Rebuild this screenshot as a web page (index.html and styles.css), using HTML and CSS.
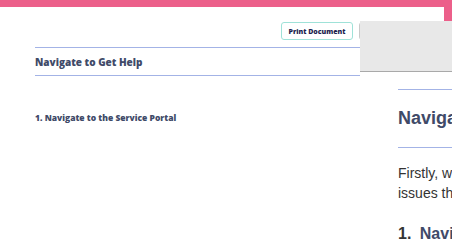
FILE: index.html
```html
<!DOCTYPE html>
<html lang="en">

<head>
  <meta charset="UTF-8">
  <meta name="viewport" content="width=device-width, initial-scale=1.0">
  <title>Navigate to Get Help</title>
  <link rel="stylesheet" href="styles.css">
</head>

<body>
  <div class="topbar"></div>

  <div class="page">
    <div class="toolbar">
      <button class="btn btn-print">Print Document</button>
      <button class="btn btn-other">Download</button>
    </div>

    <h1 class="doc-title">Navigate to Get Help</h1>

    <h2 class="step">1. Navigate to the Service Portal</h2>
  </div>

  <div class="preview">
    <div class="preview-head"></div>
    <div class="preview-body">
      <h1 class="preview-title">Navigate to Get Help</h1>
      <p>Firstly, we will show you how to report any issues that you are having.</p>
      <h2 class="preview-step"><span>1.</span> Navigate to the Service Portal</h2>
    </div>
  </div>
</body>

</html>
```

FILE: styles.css
```css
* {
  padding: 0;
  margin: 0;
  box-sizing: border-box;
}

body {
  font-family: "Open Sans", sans-serif;
  background-color: #ec5f8a;
  width: 452px;
  height: 248px;
  overflow: hidden;
  position: relative;
}

.topbar {
  height: 7px;
}

.page {
  width: 444px;
  height: 241px;
  background-color: white;
  padding: 15px 35px 0 35px;
}

.toolbar {
  display: flex;
  justify-content: flex-end;
  gap: 6px;
}

.btn {
  font-family: "Open Sans", sans-serif;
  font-size: 7px;
  font-weight: 800;
  color: #1d1f4f;
  background-color: white;
  border-radius: 3px;
  height: 18px;
  padding: 0;
  white-space: nowrap;
}

.btn-print {
  width: 72px;
  border: 1px solid #9fe2d8;
}

.btn-other {
  width: 50px;
  border: 1px solid #c9c9c9;
}

.doc-title {
  margin-top: 7px;
  border-top: 1px solid #a3b3e6;
  border-bottom: 1px solid #a3b3e6;
  height: 29px;
  font-size: 10px;
  font-weight: 800;
  color: #404a68;
  display: flex;
  align-items: center;
}

.step {
  margin-top: 36px;
  font-size: 8.5px;
  font-weight: 800;
  color: #404a68;
}

.preview {
  position: absolute;
  left: 360px;
  top: 21px;
  width: 92px;
  height: 227px;
  background-color: white;
  overflow: hidden;
}

.preview-head {
  height: 51px;
  background-color: #e8e8e8;
  border-bottom: 1px solid #a9a9a9;
}

.preview-body {
  width: 400px;
  padding: 17px 0 0 38px;
  font-family: "Liberation Sans", Arial, sans-serif;
}

.preview-title {
  border-top: 1px solid #a3b3e6;
  border-bottom: 1px solid #a3b3e6;
  height: 59px;
  font-size: 18px;
  font-weight: 700;
  color: #404a68;
  display: flex;
  align-items: center;
}

.preview-body p {
  margin-top: 15px;
  font-size: 14px;
  line-height: 20px;
  color: #333;
  width: 280px;
}

.preview-step {
  margin-top: 22px;
  font-size: 16px;
  font-weight: 700;
  color: #404a68;
}

.preview-step span {
  color: #333;
  margin-right: 4px;
}
```
